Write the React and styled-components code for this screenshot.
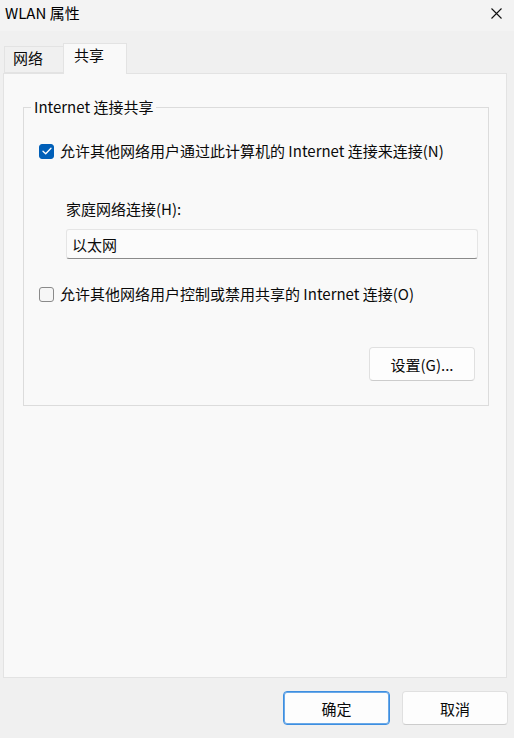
import React from "react";
import styled, { createGlobalStyle } from "styled-components";

const Global = createGlobalStyle`
  html, body { margin: 0; padding: 0; background: #f0f0f0; }
  body { font-family: "Noto Sans CJK SC", "Noto Sans", sans-serif; font-size: 15px; color: #0a0a0a; }
  * { box-sizing: border-box; }
`;

const Window = styled.div`
  width: 514px;
  height: 738px;
  display: flex;
  flex-direction: column;
  background: #f0f0f0;
  overflow: hidden;
`;

const TitleBar = styled.div`
  height: 31px;
  flex: none;
  display: flex;
  align-items: center;
  justify-content: space-between;
  padding: 0 12px 5px 5px;
  background: #f3f3f3;
`;

const Title = styled.span`
  font-size: 15px;
  line-height: 20px;
  color: #000;
`;

const Close = styled.div`
  width: 11px;
  height: 11px;
  display: flex;
`;

const TabStrip = styled.div`
  display: flex;
  align-items: flex-end;
  margin-top: 12px;
  padding-left: 4px;
  height: 30px;
  position: relative;
  z-index: 1;
`;

const Tab = styled.div`
  height: ${(p) => (p.$active ? 31 : 27)}px;
  width: ${(p) => (p.$active ? 64 : 59)}px;
  margin-bottom: ${(p) => (p.$active ? -1 : 0)}px;
  display: flex;
  align-items: center;
  padding-left: ${(p) => (p.$active ? 10 : 8)}px;
  padding-bottom: ${(p) => (p.$active ? 9 : 4)}px;
  background: ${(p) => (p.$active ? "#f9f9f9" : "#f0f0f0")};
  border: 1px solid #e3e3e3;
  border-bottom: ${(p) => (p.$active ? "none" : "1px solid #e3e3e3")};
  border-right: ${(p) => (p.$active ? "1px solid #e3e3e3" : "none")};
  font-size: 15px;
`;

const Panel = styled.div`
  flex: 1;
  margin: 0 7px 0 3px;
  background: #f9f9f9;
  border: 1px solid #e3e3e3;
  padding: 23px 17px 0 19px;
`;

const Group = styled.fieldset`
  margin: 0;
  width: 466px;
  min-width: 0;
  border: 1px solid #dcdcdc;
  border-radius: 0;
  padding: 0 10px 24px 15px;
  display: flex;
  flex-direction: column;
`;

const Legend = styled.legend`
  margin-left: -8px;
  padding: 0 3px;
  line-height: 20px;
  font-size: 15px;
`;

const CheckRow = styled.label`
  display: flex;
  align-items: center;
  gap: 6px;
  height: 20px;
  margin-top: ${(p) => p.$top}px;
  font-size: 15px;
  line-height: 20px;
  white-space: nowrap;
`;

const Box = styled.span`
  width: 15px;
  height: 15px;
  flex: none;
  border-radius: 3px;
  display: flex;
  align-items: center;
  justify-content: center;
  background: ${(p) => (p.$checked ? "#005fb8" : "#f6f6f6")};
  border: 1px solid ${(p) => (p.$checked ? "#005fb8" : "#8a8a8a")};
`;

const Indented = styled.div`
  margin-left: 27px;
  display: flex;
  flex-direction: column;
`;

const FieldLabel = styled.div`
  margin-top: 38px;
  line-height: 20px;
  font-size: 15px;
`;

const Input = styled.div`
  margin-top: 10px;
  width: 412px;
  height: 30px;
  display: flex;
  align-items: center;
  padding-left: 5px;
  background: #fbfbfb;
  border: 1px solid #e5e5e5;
  border-bottom: 1px solid #8a8a8a;
  border-radius: 3px;
  font-size: 15px;
`;

const ButtonRow = styled.div`
  display: flex;
  justify-content: flex-end;
  margin-top: ${(p) => p.$top || 0}px;
  padding-right: 3px;
`;

const Button = styled.button`
  width: ${(p) => p.$w}px;
  height: 34px;
  font-family: inherit;
  font-size: 15px;
  color: #0a0a0a;
  background: #fdfdfd;
  border: 1px solid ${(p) => (p.$primary ? "#3d8ee0" : "#e0e0e0")};
  border-bottom-color: ${(p) => (p.$primary ? "#3d8ee0" : "#cccccc")};
  border-radius: 4px;
  padding: 0;
  ${(p) => p.$primary && "box-shadow: inset 0 0 0 1px #6aa9e8;"}
`;

const Footer = styled.div`
  height: 60px;
  flex: none;
  display: flex;
  justify-content: flex-end;
  align-items: flex-start;
  padding: 13px 6px 0 0;
  gap: 12px;
`;

function Check() {
  return (
    <svg width="10" height="8" viewBox="0 0 10 8">
      <path d="M1 4.2 L3.7 6.8 L9 1.2" fill="none" stroke="#fff" strokeWidth="1.3" strokeLinecap="round" strokeLinejoin="round" />
    </svg>
  );
}

export default function App() {
  return (
    <>
      <Global />
      <Window>
        <TitleBar>
          <Title>WLAN 属性</Title>
          <Close>
            <svg width="11" height="11" viewBox="0 0 11 11">
              <path d="M0.5 0.5 L10.5 10.5 M10.5 0.5 L0.5 10.5" stroke="#111" strokeWidth="1.1" />
            </svg>
          </Close>
        </TitleBar>
        <TabStrip>
          <Tab>网络</Tab>
          <Tab $active>共享</Tab>
        </TabStrip>
        <Panel>
          <Group>
            <Legend>Internet 连接共享</Legend>
            <CheckRow $top={24}>
              <Box $checked>
                <Check />
              </Box>
              允许其他网络用户通过此计算机的 Internet 连接来连接(N)
            </CheckRow>
            <Indented>
              <FieldLabel>家庭网络连接(H):</FieldLabel>
              <Input>以太网</Input>
            </Indented>
            <CheckRow $top={25}>
              <Box />
              允许其他网络用户控制或禁用共享的 Internet 连接(O)
            </CheckRow>
            <ButtonRow $top={43}>
              <Button $w={106}>设置(G)...</Button>
            </ButtonRow>
          </Group>
        </Panel>
        <Footer>
          <Button $w={107} $primary>确定</Button>
          <Button $w={106}>取消</Button>
        </Footer>
      </Window>
    </>
  );
}
